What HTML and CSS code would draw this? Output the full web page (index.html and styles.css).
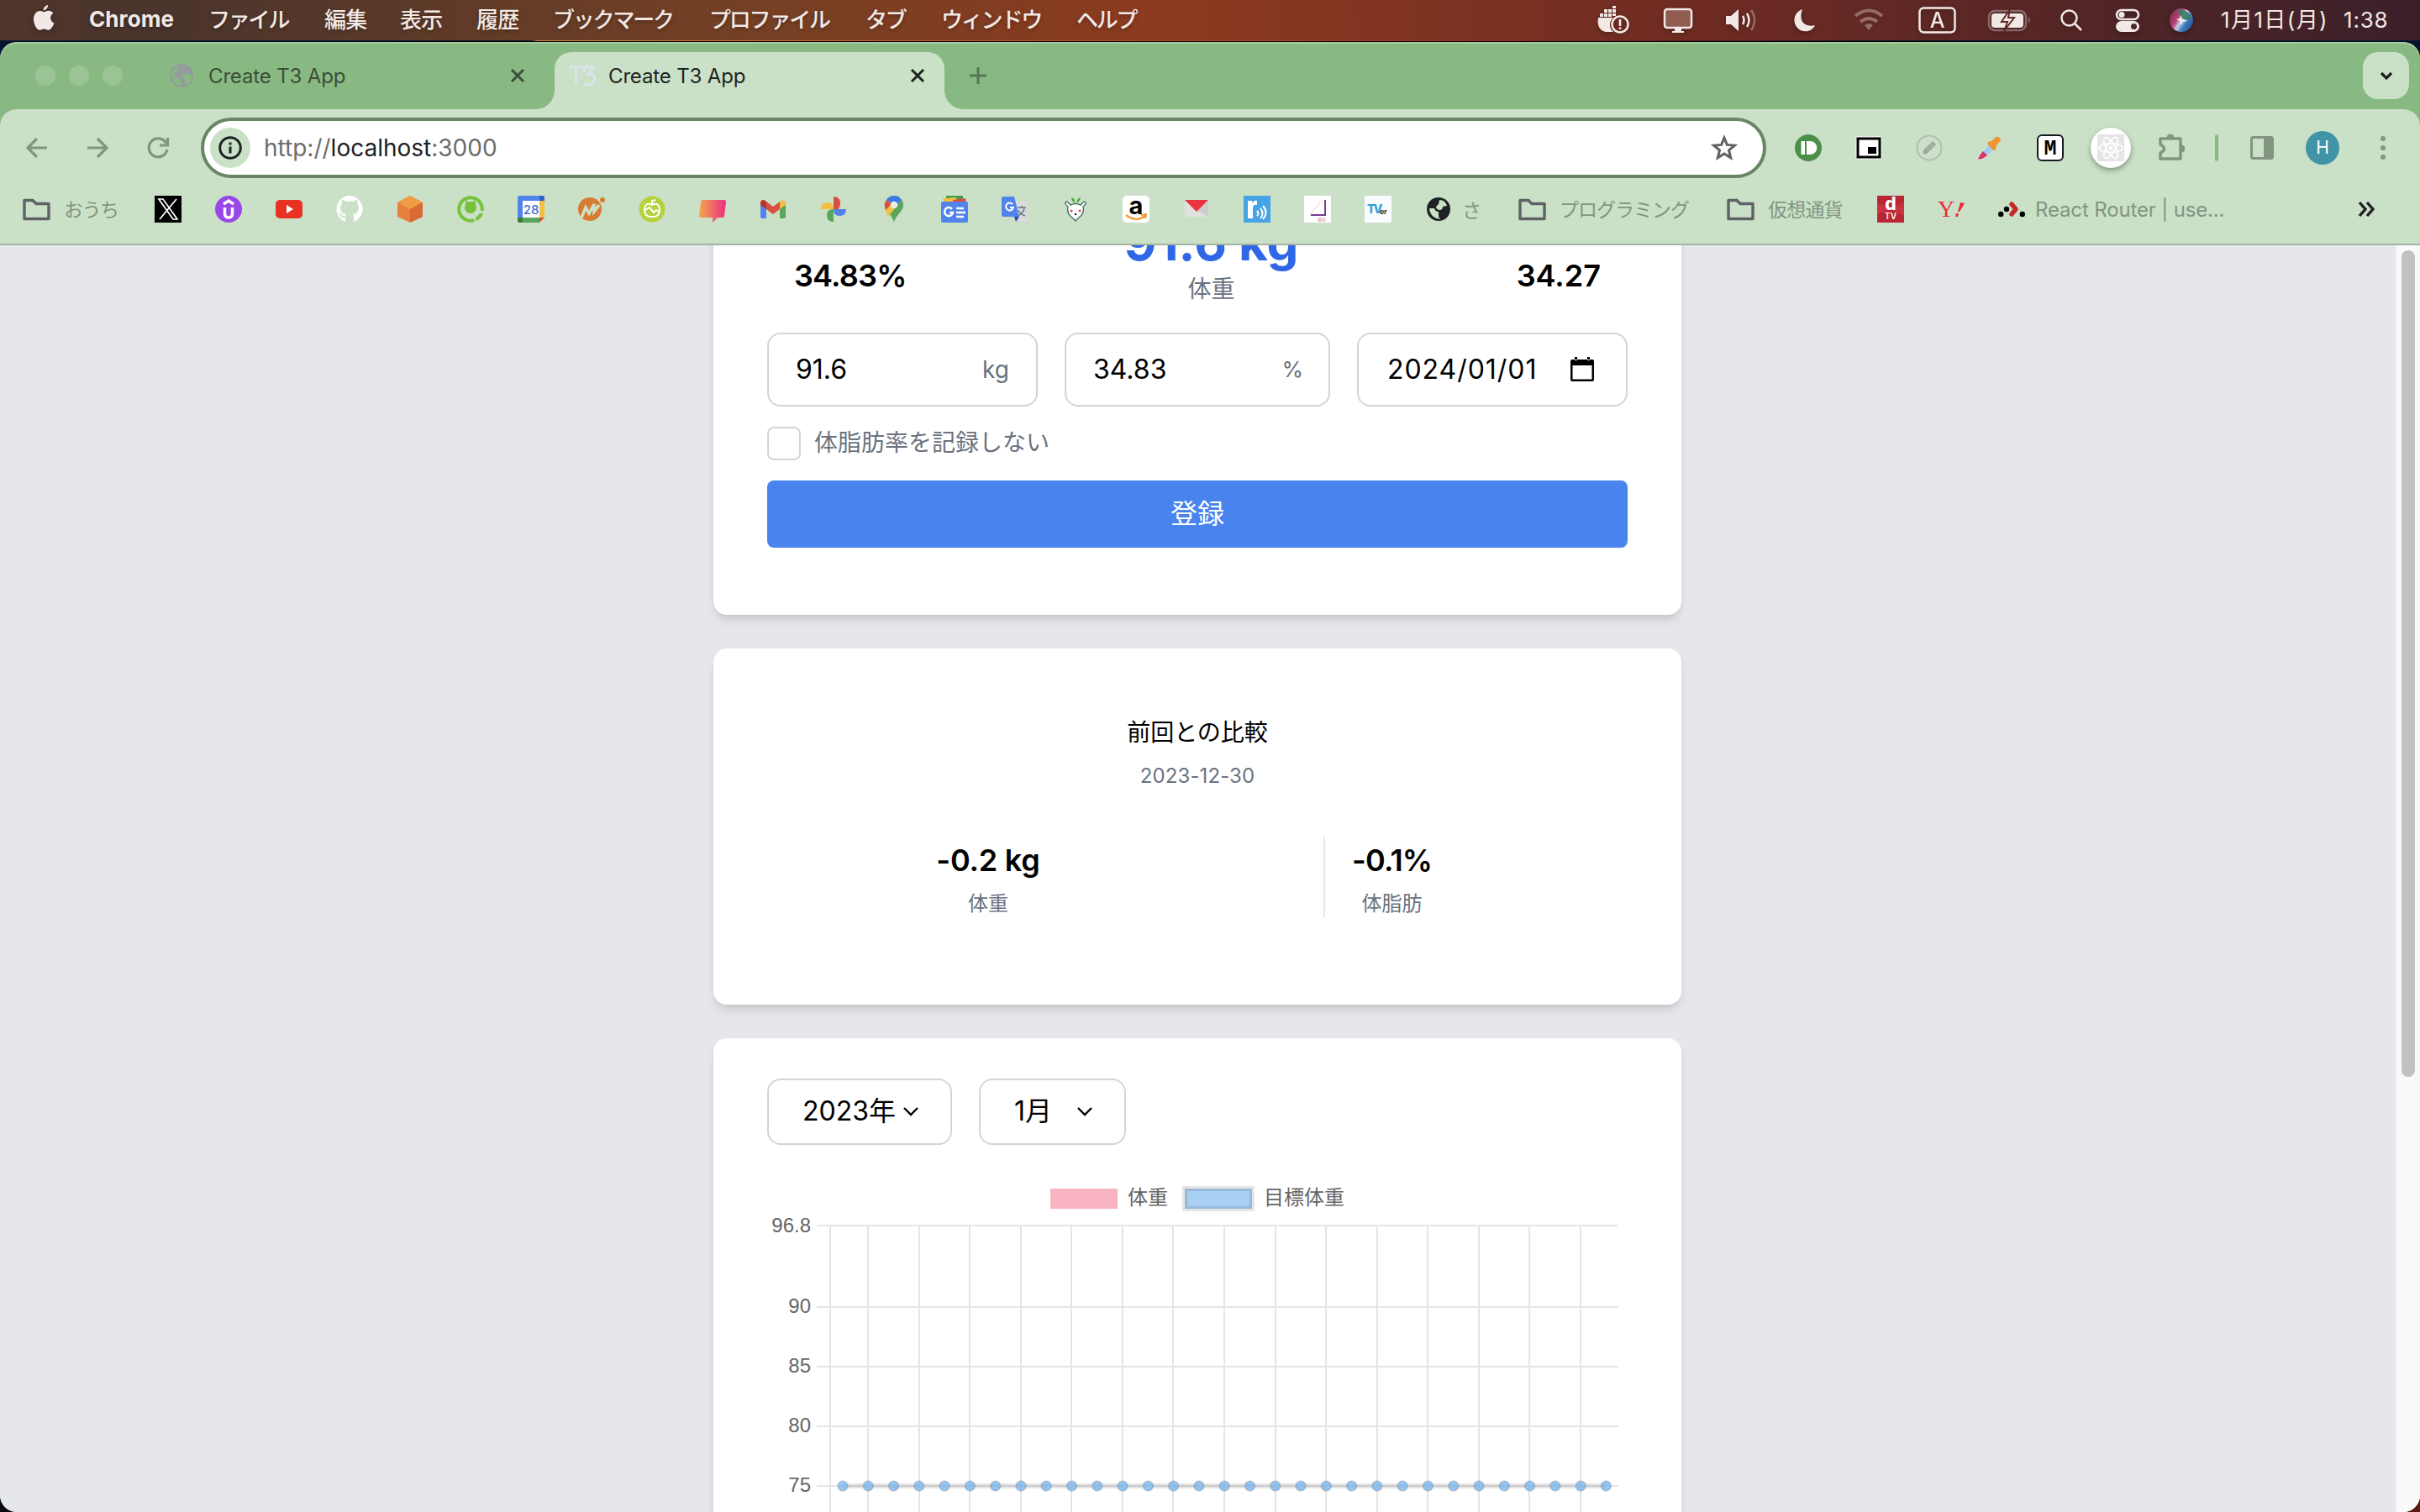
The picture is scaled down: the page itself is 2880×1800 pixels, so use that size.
FILE: index.html
```html
<!DOCTYPE html>
<html lang="ja">
<head>
<meta charset="utf-8">
<title>Create T3 App</title>
<link rel="stylesheet" href="styles.css">
</head>
<body>
<header class="menubar">
  <nav class="menus">
    <svg class="apple" width="28" height="32" viewBox="0 0 28 32"><path d="M19 0c.3 3-2.300 6.300-5.300 6.300C13.300 3.500 16 .4 19 0ZM14.300 8.300c1.500 0 3-1.500 5.500-1.500 2.300 0 4.400 1.200 5.600 3-4.800 2.900-4 9.600 1 11.600-1.200 3.600-4 8.400-6.900 8.400-2 0-2.700-1.300-5.100-1.300s-3.200 1.300-5.100 1.300C5.800 29.800 2 23 2 17c0-6 3.600-9.900 7.600-9.900 2.100 0 3.600 1.200 4.700 1.200Z"/></svg>
    <b>Chrome</b><span>ファイル</span><span class="kanji">編集</span><span class="kanji">表示</span><span class="kanji">履歴</span><span>ブックマーク</span><span>プロファイル</span><span>タブ</span><span>ウィンドウ</span><span>ヘルプ</span>
  </nav>
  <div class="status">
    <svg width="40" height="34" viewBox="0 0 40 34"><path d="M2 14h18a11 11 0 0 0 0 17H12C5 31 0 24 2 14ZM4 9h4v4H4zM9 9h4v4H9zM14 9h4v4h-4zM9 4h4v4H9zM14 4h4v4h-4zM19 4h4v4h-4zM19 9h4v3h-4zM19 0h4v3h-4z"/><circle cx="28" cy="22" r="9.500" fill="none" stroke="#f2e9e6" stroke-width="2.500"/><path d="M26.700 16h2.600v8h-2.600zM26.700 25.500h2.600V28h-2.600z"/></svg>
    <svg width="36" height="32" viewBox="0 0 36 32"><rect x="2" y="3" width="32" height="22" rx="3" fill="#915d52" stroke="#f2e9e6" stroke-width="2.500"/><path d="M14 26h8v3h3v2H11v-2h3z"/></svg>
    <svg width="40" height="32" viewBox="0 0 40 32"><path d="M1 11h6l9-8v26l-9-8H1z"/><path class="line" d="M21 11q3 5 0 10M26 8q5 8 0 16"/><path class="line dim" d="M31 4q8 12 0 24"/></svg>
    <svg width="32" height="32" viewBox="0 0 32 32"><path d="M13 3C8 17 15 25 28 22 25 30 13 32 7 25 0 17 4 6 13 3Z"/></svg>
    <svg class="dim" width="40" height="32" viewBox="0 0 40 32"><path d="m20 28-5-6q5-4 10 0z"/><path class="line thick" d="M10 18q10-8 20 0M4 11q16-13 32 0"/></svg>
    <svg width="46" height="34" viewBox="0 0 46 34"><rect class="line" x="1.500" y="2.500" width="42" height="29" rx="5"/><text x="22.500" y="26" text-anchor="middle" font-size="25" font-weight="500">A</text></svg>
    <svg width="54" height="32" viewBox="0 0 54 32"><rect class="line dim" x="2" y="5" width="44" height="23" rx="7"/><rect x="5" y="8" width="38" height="17" rx="4"/><path class="dim" d="M49 12q4 4 0 8z"/><path d="m27 3-10 15h7l-4 11 12-16h-7z" stroke="#5f2925" stroke-width="2"/></svg>
    <svg width="32" height="32" viewBox="0 0 32 32"><circle class="line" cx="13.500" cy="13.500" r="9"/><path class="line" d="m20 20 8 8"/></svg>
    <svg width="32" height="32" viewBox="0 0 32 32"><rect class="line" x="3" y="4" width="26" height="11" rx="5.500"/><circle cx="9" cy="9.500" r="3.500"/><rect x="2" y="17" width="28" height="13" rx="6.500"/><circle cx="23.500" cy="23.500" r="3.500" fill="#502526"/></svg>
    <svg width="30" height="30" viewBox="0 0 30 30"><defs><linearGradient id="siri" x1="0" y1=".2" x2="1" y2=".8"><stop offset="0" stop-color="#7b3149"/><stop offset=".35" stop-color="#b84178"/><stop offset=".5" stop-color="#c5cfe8"/><stop offset=".7" stop-color="#3c7cc0"/><stop offset="1" stop-color="#274c83"/></linearGradient></defs><circle cx="15" cy="15" r="14" fill="url(#siri)"/><path d="M10 2q14 0 17 11-5 2-12 1z" fill="#3c7b64" opacity=".9"/><path d="m14 9 2 4 6 3-5 1-2 4-2-5-4-2 4-1z"/></svg>
    <span class="date">1月1日(月)</span><span class="time">1:38</span>
  </div>
</header>
<div class="desktop">
<div class="window">
  <div class="tabstrip">
    <div class="lights"><i></i><i></i><i></i></div>
    <div class="tab">
      <svg width="28" height="28" viewBox="0 0 28 28"><circle cx="14" cy="14" r="14" fill="#949b9c"/><path d="M13 2q-4 2-3 5l-4 3v5l-4 1Q1 6 13 2ZM3 17h6l4 3v6Q5 25 3 17Zm12-4q5-3 11 1 0 8-6 11-4-3-1-6-4-2-4-6Z" fill="#89b982"/></svg>
      <span>Create T3 App</span>
      <svg class="x" width="20" height="20" viewBox="0 0 20 20"><path d="m3 3 14 14M17 3 3 17"/></svg>
    </div>
    <div class="tab active">
      <svg width="32" height="28" viewBox="0 0 32 28" fill="none" stroke="#dde3ec" stroke-width="3"><path d="M0 4h17M8.500 4v20M20 4h9l-6 8c11-1 9 13 0 13-3 0-4-1-5-2M22 1l-5 9"/></svg>
      <span>Create T3 App</span>
      <svg class="x" width="20" height="20" viewBox="0 0 20 20"><path d="m3 3 14 14M17 3 3 17"/></svg>
    </div>
    <svg class="plus" width="22" height="22" viewBox="0 0 22 22"><path d="M11 1v20M1 11h20"/></svg>
    <div class="tabsearch"><svg width="20" height="20" viewBox="0 0 20 20"><path d="m4 7 6 6 6-6"/></svg></div>
  </div>
  <div class="toolbar">
    <div class="navs">
      <svg width="28" height="28" viewBox="0 0 28 28"><path d="M26 14H4M14 3 3 14l11 11"/></svg>
      <svg width="28" height="28" viewBox="0 0 28 28"><path d="M2 14h22M14 3l11 11-11 11"/></svg>
      <svg width="28" height="28" viewBox="0 0 28 28"><path d="M25 16A11 11 0 1 1 22 6l2 3"/><path d="M25.500 2v9H16" /></svg>
    </div>
    <div class="omnibox">
      <div class="info"><svg width="30" height="30" viewBox="0 0 30 30"><circle cx="15" cy="15" r="12.300" fill="none" stroke="#1f2124" stroke-width="3"/><path d="M13.500 13.500h3v8h-3zM13.500 8.500h3v3h-3z" fill="#1f2124"/></svg></div>
      <span class="url">http://<b>localhost</b>:3000</span>
      <svg width="34" height="34" viewBox="0 0 34 34"><path d="m17 5 3.400 8.400 9 .7-6.900 5.800 2.200 8.900L17 24l-7.700 4.800 2.200-8.900-6.900-5.800 9-.7z" fill="none" stroke="#5f6165" stroke-width="3"/></svg>
    </div>
    <div class="extensions">
      <svg viewBox="0 0 32 32"><circle cx="16" cy="16" r="16" fill="#4b8f49"/><path d="M7.500 8H12v16H7.500zM14 8h4c11 0 11 16 0 16h-4z" fill="#fff"/></svg>
      <svg viewBox="0 0 32 32"><rect x=".5" y="2.500" width="31" height="27" rx="3" fill="#fff"/><rect x="3" y="5" width="26" height="22" fill="none" stroke="#000" stroke-width="3"/><path d="M15 15h10v8H15z"/></svg>
      <svg viewBox="0 0 32 32"><circle cx="16" cy="16" r="14.500" fill="none" stroke="#b5bdb4" stroke-width="2"/><path d="m9 19 11-11 4 4-11 11q-5 2-4-4Z" fill="#9ba29b"/><path d="m13 17 2 2m0-4 2 2m0-4 2 2m0-4 2 2" stroke="#cae1c7"/></svg>
      <svg viewBox="0 0 32 32"><path d="m5 24 11-12 5 5L10 27z" fill="#9fccf4"/><path d="m8 20 5 5-6 4-5 .500L4 25z" fill="#dc3266"/><path d="m14 9 4-1 5-5q5-1 6 4l-5 6-1 5-3 1-7-8z" fill="#f0932f"/></svg>
      <svg viewBox="0 0 32 32"><rect x="1" y="1" width="30" height="30" rx="5" fill="#fff" stroke="#1a1a22" stroke-width="2"/><text x="16" y="24" text-anchor="middle" class="slab" font-size="25">M</text></svg>
      <div class="react"><svg viewBox="0 0 32 32"><rect width="32" height="32" rx="2" fill="#e5e5e5"/><g fill="none" stroke="#fff" stroke-width="1.600"><ellipse cx="16" cy="16" rx="14" ry="5.300"/><ellipse cx="16" cy="16" rx="14" ry="5.300" transform="rotate(60 16 16)"/><ellipse cx="16" cy="16" rx="14" ry="5.300" transform="rotate(120 16 16)"/></g><circle cx="16" cy="16" r="2.500" fill="#fff"/></svg></div>
      <svg viewBox="0 0 32 32" fill="none" stroke="#839480" stroke-width="3.500"><path d="M3 5h24v24H3v-7q9-5 0-10z" stroke-linejoin="round"/><path d="M11 4a4 4 0 0 1 8 0zM28 13a4 4 0 0 1 0 8z" fill="#839480" stroke-width="1"/></svg>
    </div>
    <i class="sep"></i>
    <svg class="panel" width="32" height="32" viewBox="0 0 32 32"><rect x="3.500" y="3.500" width="25" height="25" rx="2" fill="none" stroke="#839480" stroke-width="3"/><path d="M18 3h10v26H18z" fill="#839480"/></svg>
    <div class="avatar">H</div>
    <svg class="dots" width="8" height="32" viewBox="0 0 8 32"><circle cx="4" cy="5" r="3"/><circle cx="4" cy="16" r="3"/><circle cx="4" cy="27" r="3"/></svg>
  </div>
  <div class="bookmarks">
    <span class="folder"><svg width="36" height="32" viewBox="0 0 36 32"><path d="M3 5.500h10l4 4h15v18H3z"/></svg><em>おうち</em></span>
    <div class="icons">
      <svg viewBox="0 0 32 32"><path d="M0 0h32v32H0z"/><path d="m5 4h5l17 24h-5zM26 4 6 28" fill="none" stroke="#fff" stroke-width="1.700"/></svg>
      <svg viewBox="0 0 32 32"><circle cx="16" cy="16" r="16" fill="#9847e8"/><path d="M11.500 14v7q0 5 4.500 5t4.500-5v-7M10 10l6-4 6 4" fill="none" stroke="#fff" stroke-width="3.500"/></svg>
      <svg viewBox="0 0 32 32"><rect y="5" width="32" height="22" rx="5" fill="#e83323"/><path d="m13 11 8 5-8 5z" fill="#fff"/></svg>
      <svg viewBox="0 0 32 32"><path d="M16 0a16 16 0 0 0-5 31v-5q-5 1-6-3l-2-2q3-1 4 2 2 2 4 1l1-2q-7-1-7-8 0-3 2-5-1-2 0-4 3 0 5 2 4-1 8 0 2-2 5-2 1 2 0 4 2 2 2 5 0 7-7 8 1 1 1 3v6A16 16 0 0 0 16 0Z" fill="#fff"/></svg>
      <svg viewBox="0 0 32 32"><path d="m16 0 15 8v17l-15 7-15-7V8z" fill="#e5813c"/><path d="m16 0 15 8-15 8L1 8z" fill="#f09b45"/><path d="m16 16 15-8v17l-15 7z" fill="#da6936"/></svg>
      <svg viewBox="0 0 32 32"><circle cx="16" cy="16" r="13.800" fill="none" stroke="#75c33b" stroke-width="4" stroke-dasharray="71 3 10 3" transform="rotate(72 16 16)"/><circle cx="16" cy="14" r="7" fill="#75c33b"/><path d="m10 10 1-5 3 3h4l3-3 1 5" fill="#75c33b"/></svg>
      <svg viewBox="0 0 32 32"><path d="M0 2q0-2 2-2h24v6H6v20H0z" fill="#5083ec"/><path d="M26 0h4q2 0 2 2v4h-6z" fill="#2e63c4"/><path d="M26 6h6v20h-6z" fill="#f3be42"/><path d="M6 26h20v6H6z" fill="#58a55c"/><path d="M0 26h6v6H2q-2 0-2-2z" fill="#387d3e"/><path d="M26 26h6l-6 6z" fill="#d85040"/><path d="M6 6h20v20H6z" fill="#fff"/><text x="16" y="21.500" text-anchor="middle" font-size="15" font-weight="500" fill="#3d6fce">28</text></svg>
      <svg viewBox="0 0 32 32"><circle cx="14" cy="16" r="14" fill="#d87c32"/><path d="m4 26 5-12 4 7 6-11v9l6-8" fill="none" stroke="#cae1c7" stroke-width="3.500"/><circle cx="29" cy="5" r="3" fill="#d87c32"/></svg>
      <svg viewBox="0 0 32 32"><circle cx="16" cy="16" r="15.500" fill="#b5d23e"/><path d="M16 11q-8-4-9 5 0 10 9 9 9 1 9-9-1-9-9-5Zm0 0V6l4-1M8 17l5-3 5 6 3-3 3 2" fill="none" stroke="#fff" stroke-width="2"/></svg>
      <svg viewBox="0 0 32 32"><defs><linearGradient id="say"><stop stop-color="#f3a64b"/><stop offset="1" stop-color="#ec2e83"/></linearGradient></defs><path d="M4 5h26q2 0 2 3l-2 16q0 2-3 2h-5l-6 6v-6H2q-2 0-2-3L2 8q0-3 2-3Z" fill="url(#say)"/></svg>
      <svg viewBox="0 0 32 32"><path d="M1 9h7v18H3q-2 0-2-2z" fill="#5083ec"/><path d="M24 9h7v16q0 2-2 2h-5z" fill="#58a55c"/><path d="m1 8 2-3q2-1 5 2l8 6 8-6v9l-8 6-8-6-7-5z" fill="#d85040"/><path d="M1 8q1-5 7-1v9l-7-5z" fill="#b3362d"/><path d="M24 7q6-4 7 1v3l-7 5z" fill="#f3be42"/></svg>
      <svg viewBox="0 0 32 32"><path d="M16 16V1q8 0 8 8 0 3-2 7z" fill="#d85040"/><path d="M16 16H1q0-8 8-8 7 0 7 8Z" fill="#f3be42"/><path d="M16 16v15q-8 0-8-8 0-7 8-7Z" fill="#58a55c"/><path d="M16 16h15q0 8-8 8-7 0-7-8Z" fill="#5083ec"/></svg>
      <svg viewBox="0 0 32 32"><path d="M16 32C15 24 5 19 5 11a11 11 0 0 1 22 0c0 8-10 13-11 21Z" fill="#58a55c"/><path d="M16 0q6 0 9 5L9 25q-4-6-4-14A11 11 0 0 1 16 0Z" fill="#f3be42"/><path d="M16 0q6 0 9 5l-7 8L7 5q3-5 9-5Z" fill="#3b7bea"/><path d="m7 5 6 5-7 7Q3 10 7 5Z" fill="#d85040"/><circle cx="16" cy="11" r="4.300" fill="#e8f0e5"/></svg>
      <svg viewBox="0 0 32 32"><path d="M6 0h20v10H6z" fill="#3f9c50"/><path d="m2 3 16-1 2 8H4z" fill="#f3be42"/><path d="m14 5 15-2 1 6-14 2z" fill="#d85040"/><rect y="7" width="32" height="25" rx="2" fill="#5083ec"/><path d="M13 16a5 5 0 1 0 1 4h-4M18 15h9M18 20h11M18 25h9" fill="none" stroke="#fff" stroke-width="2.500"/></svg>
      <svg viewBox="0 0 32 32"><path d="M14 7h15q2 0 2 2v20q0 2-2 2H18z" fill="#d8dadb"/><path d="M2 1h13l6 24H2q-2 0-2-2V3q0-2 2-2Z" fill="#5083ec"/><path d="M15 25h6l-4 6z" fill="#3048a8"/><path d="M13 10a4.500 4.500 0 1 0 1 4h-4" fill="none" stroke="#fff" stroke-width="2"/><path d="M19 14h10M24 12v2M20 24q6-4 7-9M20 17q2 5 8 7" fill="none" stroke="#647b83" stroke-width="1.500"/></svg>
      <svg viewBox="0 0 32 32"><path d="M7 13Q1 8 6 7l4 4q6-3 12 0l4-4q5 1-1 6 2 8-5 13l-4 4-4-4q-7-5-5-13Z" fill="#fff" stroke="#4d7668" stroke-width="1.500"/><path d="M15 9q-4-3-4-7 5 1 4 7ZM17 9q0-6 5-7 0 4-5 7Z" fill="#55a944"/><circle cx="11" cy="18" r="1.500" fill="#e6455b"/><circle cx="21" cy="18" r="1.500" fill="#e6455b"/><path d="M15 21h2v2h-2z"/></svg>
      <svg viewBox="0 0 32 32"><rect width="32" height="32" rx="5" fill="#fff"/><text x="16" y="22" text-anchor="middle" font-size="29" font-weight="700">a</text><path d="M4 23q12 9 23 1M22 23l6-1-1 5" fill="none" stroke="#f09b32" stroke-width="2.200"/></svg>
      <svg viewBox="0 0 32 32"><path d="M2 5h28v20H2z" fill="#e0e0e0"/><path d="m16 17 14 8V6z" fill="#cbcccb"/><path d="M2 5h28L16 19z" fill="#ea3340"/></svg>
      <svg viewBox="0 0 32 32"><path d="M0 0h32v32H0z" fill="#46a3e4"/><path d="M5 6h5l1 3q1-4 5-3v5q-5-1-5 4v12H5z" fill="#fff"/><path d="M16 18q3 3 0 6M20 15q5 6 0 12M23 12q7 8 0 16" fill="none" stroke="#fff" stroke-width="2"/></svg>
      <svg viewBox="0 0 32 32"><path d="M0 0h32v32H0z" fill="#fff"/><path d="M25 5v18H8" fill="none" stroke="#7e3b91" stroke-width="2"/><path d="M23 4 7 22" stroke="#eec2cf"/><text x="21" y="30" text-anchor="middle" font-size="5" fill="#df8ba5">櫻坂</text></svg>
      <svg viewBox="0 0 32 32"><path d="M0 0h32v32H0z" fill="#f8fbff"/><text x="3" y="21" font-size="14" font-weight="800" letter-spacing="-2" fill="#2fa4d7">TV</text><text x="18" y="22" font-size="9" font-weight="700" letter-spacing="-.3" fill="#333">er</text></svg>
      <svg viewBox="0 0 32 32"><circle cx="16" cy="16" r="14" fill="#1f2124"/><path d="M17 5q7 0 9 7l-5 1q0 4-4 4-4-1-4-4l3-3zM5 15h6q1 4 5 4v6l2 3q-4 0-8-3-5-4-5-10Z" fill="#cae1c7"/></svg>
    </div>
    <em class="sa">さ</em>
    <span class="folder f2"><svg width="36" height="32" viewBox="0 0 36 32"><path d="M3 5.500h10l4 4h15v18H3z"/></svg><em class="kata">プログラミング</em></span>
    <span class="folder f3"><svg width="36" height="32" viewBox="0 0 36 32"><path d="M3 5.500h10l4 4h15v18H3z"/></svg><em>仮想通貨</em></span>
    <div class="icons last">
      <svg viewBox="0 0 32 32"><path d="M0 0h32v32H0z" fill="#b92735"/><path d="M0 9 16 16 0 22zM32 8 16 16l16 8z" fill="#cb3340"/><text x="16" y="17" text-anchor="middle" font-size="21" font-weight="800" fill="#fff">d</text><text x="16" y="28" text-anchor="middle" font-size="10" font-weight="600" fill="#fff">TV</text></svg>
      <svg viewBox="0 0 32 32"><text x="0" y="25" class="serif" font-size="28">Y</text><path d="m27 8 5 1-6 10h-2zM22 21h3l-1 4h-3z" fill="#ec2b38"/></svg>
      <svg viewBox="0 0 32 32"><path d="m16 10 5 6-5 6" fill="none" stroke="#c5292a" stroke-width="5.500" stroke-linecap="round" stroke-linejoin="round"/><circle cx="10" cy="16" r="3.200"/><circle cx="3.200" cy="22" r="3.200"/><circle cx="28.800" cy="22" r="3.200"/></svg>
    </div>
    <em class="rr">React Router | use...</em>
    <svg class="more" width="24" height="20" viewBox="0 0 24 20"><path d="m3 2 7 8-7 8M12 2l7 8-7 8"/></svg>
  </div>
  <div class="viewport">
    <main class="page">
      <section class="card first">
        <div class="stats">
          <div class="stat"><small>体脂肪</small><strong class="pct">34.83%</strong></div>
          <div class="stat weight"><strong>91.6 kg</strong><span>体重</span></div>
          <div class="stat"><small>BMI</small><strong>34.27</strong></div>
        </div>
        <div class="fields">
          <label class="field"><span>91.6</span><i>kg</i></label>
          <label class="field"><span>34.83</span><i class="unit">%</i></label>
          <label class="field dt"><span>2024/01/01</span><svg width="28" height="30" viewBox="0 0 28 30"><path d="M2 3h24q2 0 2 2v22q0 2-2 2H2q-2 0-2-2V5q0-2 2-2Zm.5 7v16.500h23V10ZM5 0h3v4H5zM20 0h3v4h-3z" fill-rule="evenodd"/></svg></label>
        </div>
        <label class="skip"><i></i><span>体脂肪率を記録しない</span></label>
        <div class="submit">登録</div>
      </section>
      <section class="card compare">
        <h2>前回との比較</h2>
        <time>2023-12-30</time>
        <div class="diff">
          <div><strong>-0.2 kg</strong><span>体重</span></div>
          <div class="fat"><strong class="pct">-0.1%</strong><span>体脂肪</span></div>
        </div>
      </section>
      <section class="card history">
        <div class="selects">
          <div class="select year"><span>2023年</span><svg width="20" height="12" viewBox="0 0 20 12"><path d="m2 2 8 8 8-8"/></svg></div>
          <div class="select month"><span>1月</span><svg width="20" height="12" viewBox="0 0 20 12"><path d="m2 2 8 8 8-8"/></svg></div>
        </div>
        <div class="legend"><i class="pink"></i><span>体重</span><i class="blue"></i><span>目標体重</span></div>
        <svg class="chart" width="1024" height="370" viewBox="913 1450 1024 370">
          <g class="ticks" text-anchor="end"><text x="965" y="1467">96.8</text><text x="965" y="1563">90</text><text x="965" y="1634">85</text><text x="965" y="1705">80</text><text x="965" y="1776">75</text></g>
          <path class="grid" d="M972 1459H1926M972 1556H1926M972 1627H1926M972 1698H1926M972 1769H1926M988 1459v350M1033 1459v350M1094 1459v350M1154 1459v350M1215 1459v350M1275 1459v350M1336 1459v350M1396 1459v350M1457 1459v350M1518 1459v350M1578 1459v350M1639 1459v350M1699 1459v350M1760 1459v350M1820 1459v350M1881 1459v350"/>
          <path class="target" d="M1003 1769H1911.500"/>
          <defs><circle id="p" r="6"/></defs>
          <g class="points"><use href="#p" x="1003" y="1769"/><use href="#p" x="1033.300" y="1769"/><use href="#p" x="1063.500" y="1769"/><use href="#p" x="1093.800" y="1769"/><use href="#p" x="1124.100" y="1769"/><use href="#p" x="1154.400" y="1769"/><use href="#p" x="1184.700" y="1769"/><use href="#p" x="1215" y="1769"/><use href="#p" x="1245.200" y="1769"/><use href="#p" x="1275.500" y="1769"/><use href="#p" x="1305.800" y="1769"/><use href="#p" x="1336.100" y="1769"/><use href="#p" x="1366.400" y="1769"/><use href="#p" x="1396.600" y="1769"/><use href="#p" x="1426.900" y="1769"/><use href="#p" x="1457.200" y="1769"/><use href="#p" x="1487.500" y="1769"/><use href="#p" x="1517.800" y="1769"/><use href="#p" x="1548" y="1769"/><use href="#p" x="1578.300" y="1769"/><use href="#p" x="1608.600" y="1769"/><use href="#p" x="1638.900" y="1769"/><use href="#p" x="1669.200" y="1769"/><use href="#p" x="1699.400" y="1769"/><use href="#p" x="1729.700" y="1769"/><use href="#p" x="1760" y="1769"/><use href="#p" x="1790.300" y="1769"/><use href="#p" x="1820.600" y="1769"/><use href="#p" x="1850.800" y="1769"/><use href="#p" x="1881.100" y="1769"/><use href="#p" x="1911.400" y="1769"/></g>
        </svg>
      </section>
    </main>
    <div class="scrollbar"><i></i></div>
  </div>
</div>
</div>
</body>
</html>
```
FILE: styles.css
```css
* { box-sizing: border-box; }
body { margin: 0; width: 2880px; height: 1800px; overflow: hidden; font-family: Inter, "Noto Sans CJK JP", sans-serif; color: #000; background: #0b1426; }
svg { display: block; flex: none; }
i, em { font-style: normal; }

/* macOS menu bar */
.menubar { height: 48px; display: flex; justify-content: space-between; color: #f2e9e6; font-size: 26px; line-height: 46px; background: linear-gradient(90deg, #50362c 0, #49342c 180px, #734024 860px, #8c3a1f 1390px, #6f2b23 2030px, #552626 2450px, #3a202a 2880px); }
.menubar svg { fill: #f2e9e6; filter: drop-shadow(0 2px 3px rgba(0,0,0,.3)); }
.menubar .line { fill: none; stroke: #f2e9e6; stroke-width: 2.5; }
.menubar .thick { stroke-width: 4; }
.menubar .dim { opacity: .35; }
.menus { display: grid; grid-template-columns: 68px 142px 138px 90px 91px 91px 186px 186px 90px 161px 120px; padding-left: 38px; white-space: nowrap; text-shadow: 0 2px 4px rgba(0,0,0,.3); }
.menus b { font-weight: 700; letter-spacing: .1px; }
.menus span { letter-spacing: -2.2px; font-weight: 500; line-height: 47px; }
.menus .kanji { letter-spacing: -.7px; }
.apple { margin-top: 6px; }
.status { display: grid; grid-template-columns: 79px 74px 79px 72px 79px 82px 84px 67px 65px 62px 146px 90px; align-items: center; white-space: nowrap; width: 980px; }
.status .date { letter-spacing: 1.4px; }
.status .time { letter-spacing: .8px; }

/* browser window */
.desktop { height: 1752px; padding-top: 2px; background: linear-gradient(90deg, #0a1a33 0 632px, #d98530 640px, #c0532a 1200px, #a83222 1700px, #40182a 2100px, #0a1730 2250px) top / 100% 1px no-repeat, linear-gradient(90deg, #04142c 0, #000 632px, #000 2200px, #04142c) top / 100% 30px no-repeat, linear-gradient(90deg, #0a0a10 0 2800px, #571a10 2870px); }
.window { height: 1750px; border-radius: 20px; overflow: hidden; background: #89b982; box-shadow: inset 0 2px #a5cb9f; }
.tabstrip { height: 80px; display: flex; align-items: center; font-size: 24px; color: #3b4e39; }
.lights { display: flex; gap: 16px; padding-left: 42px; width: 202px; }
.lights i { width: 24px; height: 24px; border-radius: 50%; background: #9bc496; }
.tab { display: flex; align-items: center; width: 458px; height: 68px; }
.tab span { margin-left: 18px; flex: 1; letter-spacing: -.15px; }
.tab .x { margin-right: 34px; }
.tab.active { align-self: flex-end; width: 464px; padding: 0 0 12px 17px; background: #cae1c7; border-radius: 20px 20px 0 0; color: #1f2421; position: relative; }
.tab.active span { margin-left: 15px; }
.tab.active .x { margin-right: 22px; }
.tab.active::before, .tab.active::after { content: ""; position: absolute; bottom: 0; width: 22px; height: 22px; }
.tab.active::before { left: -22px; background: radial-gradient(circle at 0 0, transparent 21.5px, #cae1c7 22px); }
.tab.active::after { right: -22px; background: radial-gradient(circle at 100% 0, transparent 21.5px, #cae1c7 22px); }
.x path { fill: none; stroke: currentColor; stroke-width: 3; }
.plus { margin-left: 29px; fill: none; stroke: #587654; stroke-width: 3; }
.tabsearch { margin: 0 13px 0 auto; width: 55px; height: 56px; border-radius: 18px; background: #cae1c7; display: grid; place-items: center; }
.tabsearch svg { fill: none; stroke: #1f2124; stroke-width: 3.2; }

.toolbar { height: 92px; display: flex; align-items: center; background: #cae1c7; border-radius: 20px 20px 0 0; }
.navs { display: flex; gap: 44px; padding-left: 30px; width: 239px; fill: none; stroke: #839480; stroke-width: 3.2; }
.omnibox { width: 1863px; height: 72px; border: 4px solid #6a8566; border-radius: 36px; background: #fff; display: flex; align-items: center; padding: 0 29px 0 7px; }
.info { width: 48px; height: 48px; border-radius: 50%; background: #cae1c7; display: grid; place-items: center; }
.url { margin-left: 16px; flex: 1; font-size: 28px; color: #6b6d6b; }
.url b { font-weight: 400; color: #1f2124; }
.extensions { display: flex; align-items: center; gap: 40px; margin-left: 34px; }
.extensions svg { width: 32px; height: 32px; }
.react { width: 48px; height: 48px; margin: 0 -8px; border-radius: 50%; background: #fff; display: grid; place-items: center; box-shadow: 0 3px 6px rgba(0,0,0,.35); }
.serif { font-family: "Liberation Serif", serif; fill: #ec2b38; }
.slab { font-family: "Liberation Mono", monospace; font-weight: 700; }
.sep { width: 4px; height: 32px; border-radius: 2px; background: #89b982; margin-left: 36px; }
.panel { margin-left: 36px; }
.avatar { width: 40px; height: 40px; margin-left: 36px; border-radius: 50%; background: #4094a5; color: #fff; font-size: 21px; line-height: 40px; text-align: center; }
.dots { margin-left: 48px; fill: #839480; }

.bookmarks { height: 70px; padding: 0 0 14px 26px; display: flex; align-items: center; background: #cae1c7; border-bottom: 2px solid #a3b5a0; font-size: 23px; color: #839480; white-space: nowrap; }
.folder { display: flex; align-items: center; width: 158px; }
.folder svg { fill: none; stroke: #5f6165; stroke-width: 3.4; stroke-linejoin: round; }
.folder em { margin-left: 14px; letter-spacing: -1.5px; position: relative; top: -1px; }
.icons { display: flex; gap: 40px; }
.icons svg { width: 32px; height: 32px; }
.sa { width: 64px; padding-left: 12px; }
.f2 { width: 248px; margin-left: 14px; }
.f3 { width: 180px; }
.folder .kata { letter-spacing: -1px; }
.f3 em { letter-spacing: -.8px; }
.rr { margin-left: 12px; font-size: 24px; letter-spacing: -.15px; }
.more { margin: 0 51px 0 auto; fill: none; stroke: #1f2124; stroke-width: 3.4; }

/* page */
.viewport { height: 1508px; display: flex; background: #e5e7eb; overflow: hidden; }
.page { width: 2850px; margin-top: -100px; display: flex; flex-direction: column; align-items: center; gap: 40px; }
.scrollbar { flex: 1; background: #fafafa; border-left: 2px solid #ededed; padding: 6px 0 0 6px; }
.scrollbar i { display: block; width: 16px; height: 984px; border-radius: 8px; background: #c1c1c1; }
.card { flex: none; width: 1152px; padding: 0 64px; background: #fff; border-radius: 16px; box-shadow: 0 8px 12px -2px rgba(0,0,0,.1), 0 4px 8px -4px rgba(0,0,0,.1); }
.first { height: 540px; }
.stats { height: 204px; display: flex; justify-content: space-between; align-items: flex-end; padding: 0 32px 40px; }
.stat { display: flex; flex-direction: column; align-items: center; }
.stat small { font-size: 28px; line-height: 40px; color: #6b7280; position: relative; top: -6px; }
.stat strong { font-size: 36px; line-height: 56px; font-weight: 600; }
.stat .pct, .diff .pct { letter-spacing: -.8px; }
.weight { margin-bottom: -8px; }
.stat.weight strong { font-size: 60px; line-height: 72px; font-weight: 700; color: #2f67e6; margin-bottom: 0; }
.weight span { font-size: 28px; line-height: 40px; color: #6b7280; }
.fields { display: flex; gap: 32px; }
.field { display: flex; justify-content: space-between; align-items: center; width: 322px; height: 88px; padding: 0 32px 1px; border: 2px solid #d1d5db; border-radius: 16px; font-size: 32px; }
.field:nth-child(2) { width: 316px; }
.field i { font-size: 28px; color: #6b7280; }
.field .unit { font-size: 26px; margin-right: -1px; letter-spacing: -1px; }
.dt { padding: 0 38px 1px 34px; }
.dt span { letter-spacing: .95px; }
.skip { display: flex; align-items: center; gap: 16px; height: 40px; margin: 24px 0; font-size: 28px; line-height: 36px; color: #6b7280; }
.skip span { margin-top: -2px; }
.skip i { width: 40px; height: 40px; border: 2px solid #d1d5db; border-radius: 8px; }
.submit { height: 80px; border-radius: 8px; background: #4984ee; color: #fff; font-size: 32px; line-height: 80px; text-align: center; }

.compare { height: 424px; padding-top: 80px; text-align: center; }
.compare h2 { margin: 0; font-size: 28px; line-height: 40px; font-weight: 400; }
.compare time { display: block; margin: 16px 0 56px; font-size: 24px; line-height: 32px; letter-spacing: .1px; color: #6b7280; }
.diff { display: flex; }
.diff div { width: 526px; height: 96px; display: flex; flex-direction: column; align-items: center; }
.diff .fat { width: auto; margin-left: 136px; padding-left: 32px; border-left: 2px solid #e5e7eb; }
.diff strong { font-size: 36px; line-height: 56px; font-weight: 600; letter-spacing: -.2px; }
.diff span { margin-top: 6px; font-size: 24px; line-height: 36px; color: #6b7280; }

.history { height: 700px; padding-top: 48px; }
.selects { display: flex; gap: 32px; }
.select { height: 79px; display: flex; align-items: center; border: 2px solid #d1d5db; border-radius: 16px; font-size: 32px; line-height: 40px; padding: 0 37px 0 40px; justify-content: space-between; }
.select span { margin-top: -2px; }
.select svg { fill: none; stroke: #000; stroke-width: 2.4; margin-top: -2px; }
.year { width: 220px; }
.month { width: 175px; }
.legend { display: flex; justify-content: center; align-items: center; height: 30px; margin-top: 49px; font-size: 24px; line-height: 30px; color: #666; }
.legend span { margin-top: -2px; }
.pink { width: 80px; height: 24px; background: #f8b4c3; margin-right: 12px; }
.blue { width: 86px; height: 30px; margin: 0 11px 0 17px; background: linear-gradient(#a9cff3, #a9cff3) content-box; padding: 3px; position: relative; }
.blue::after { content: ""; position: absolute; inset: 0; border: 6px solid rgba(0,0,0,.1); }
.chart { margin-top: 8px; }
.ticks { font: 24px "Liberation Sans", sans-serif; fill: #666; }
.grid { fill: none; stroke: rgba(0,0,0,.1); stroke-width: 2; }
.target { stroke: rgba(0,0,0,.1); stroke-width: 6; }
.points { fill: rgba(125,184,236,.8); stroke: rgba(0,0,0,.1); stroke-width: 2; }
```
